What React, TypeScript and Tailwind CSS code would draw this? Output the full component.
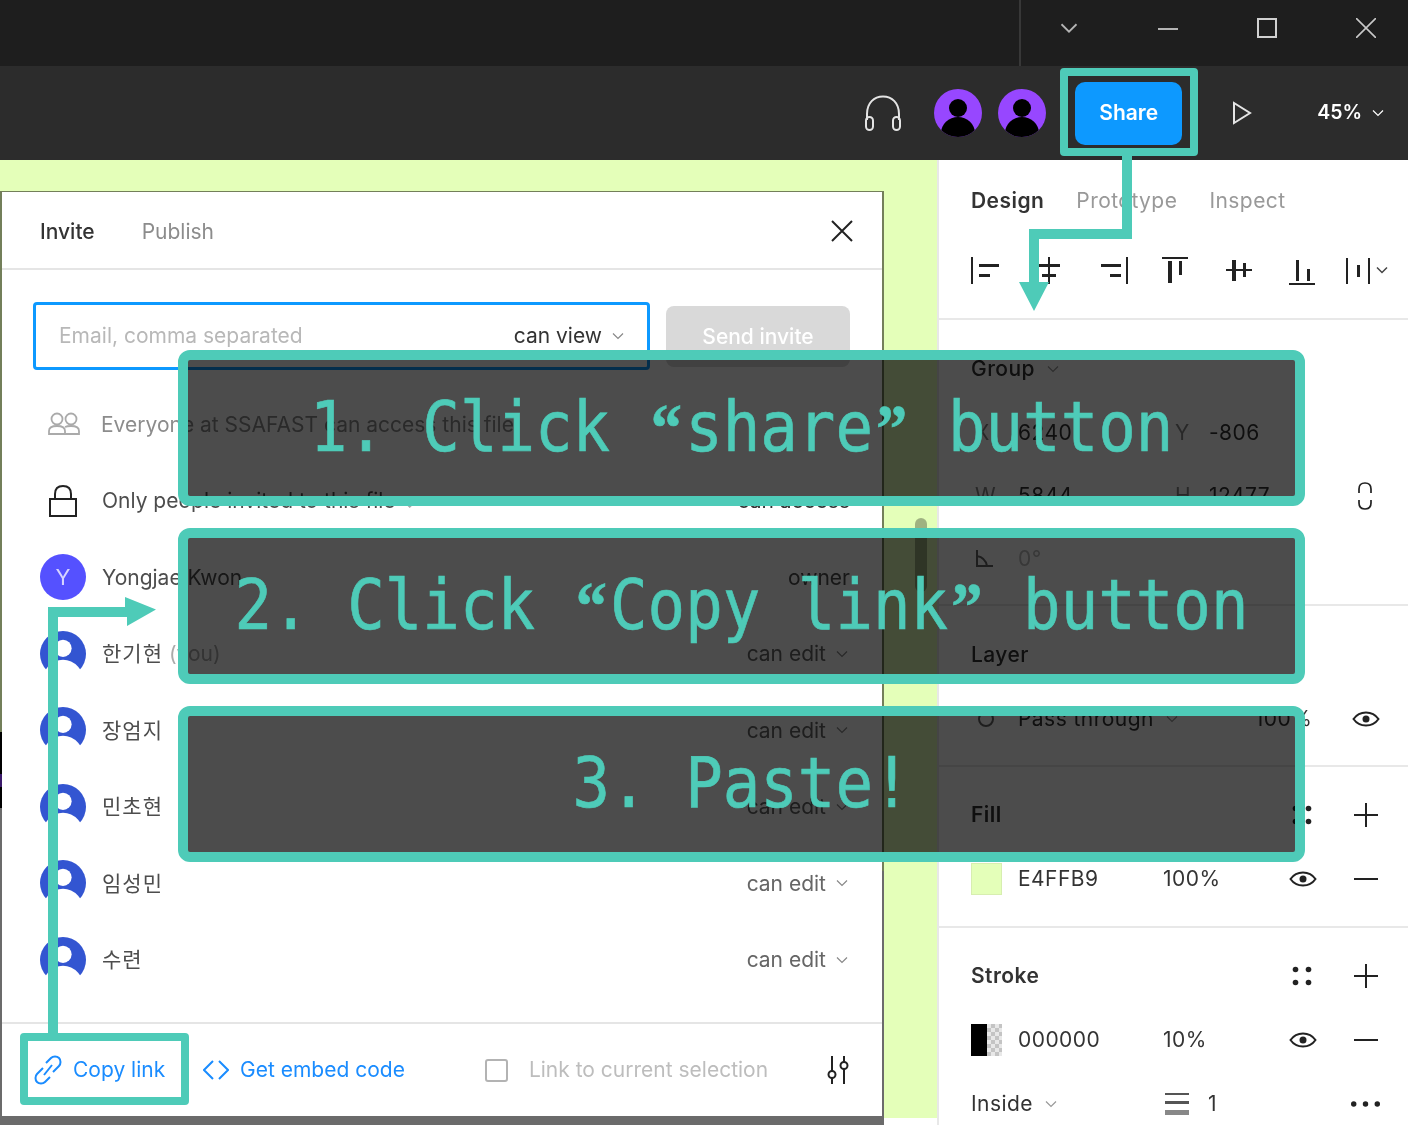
const uiFont = "font-['Inter','Noto_Sans_CJK_KR',sans-serif]";

function Chevron({ className = "" }: { className?: string }) {
  return (
    <svg viewBox="0 0 12 8" className={className} fill="none" stroke="currentColor" strokeWidth="1.2">
      <path d="M1 1.5 6 6.5 11 1.5" />
    </svg>
  );
}

function ToolbarPerson() {
  return (
    <svg viewBox="0 0 48 48" className="w-full h-full">
      <defs>
        <clipPath id="avatar-clip">
          <circle cx="24" cy="24" r="24" />
        </clipPath>
      </defs>
      <circle cx="24" cy="24" r="24" fill="#9747ff" />
      <g clipPath="url(#avatar-clip)" fill="#000">
        <circle cx="24" cy="19" r="9" />
        <ellipse cx="24" cy="44" rx="17" ry="16" />
      </g>
    </svg>
  );
}

function MemberPerson() {
  return (
    <svg viewBox="0 0 48 48" className="w-full h-full">
      <circle cx="24" cy="24" r="24" fill="#3355d1" />
      <circle cx="24" cy="18" r="9" fill="#fff" />
      <ellipse cx="24" cy="54" rx="22" ry="24" fill="#fff" />
    </svg>
  );
}

function Eye() {
  return (
    <svg viewBox="0 0 28 16" className="w-7 h-4" fill="none" stroke="#222" strokeWidth="2">
      <path d="M1.5 8C5 3 9 1.5 14 1.5S23 3 26.5 8C23 13 19 14.5 14 14.5S5 13 1.5 8Z" />
      <circle cx="14" cy="8" r="3.5" fill="#222" stroke="none" />
    </svg>
  );
}

function Plus() {
  return (
    <svg viewBox="0 0 24 24" className="w-6 h-6" stroke="#222" strokeWidth="2">
      <path d="M12 0V24M0 12H24" />
    </svg>
  );
}

function Minus() {
  return (
    <svg viewBox="0 0 24 24" className="w-6 h-6" stroke="#222" strokeWidth="2">
      <path d="M0 12H24" />
    </svg>
  );
}

function Dots() {
  return (
    <svg viewBox="0 0 20 20" className="w-5 h-5" fill="#222">
      <circle cx="3.5" cy="3.5" r="2.8" />
      <circle cx="16.5" cy="3.5" r="2.8" />
      <circle cx="3.5" cy="16.5" r="2.8" />
      <circle cx="16.5" cy="16.5" r="2.8" />
    </svg>
  );
}

function AlignIcons() {
  return (
    <svg viewBox="970 255 421 32" className="w-[421px] h-8" fill="#222" stroke="none">
      <rect x="971" y="257" width="2" height="27" />
      <rect x="979" y="264" width="20" height="3" />
      <rect x="979" y="274" width="11" height="3" />
      <rect x="1048" y="257" width="2" height="27" />
      <rect x="1038" y="264" width="22" height="3" />
      <rect x="1042" y="274" width="14" height="3" />
      <rect x="1126" y="257" width="2" height="27" />
      <rect x="1101" y="264" width="20" height="3" />
      <rect x="1110" y="274" width="11" height="3" />
      <rect x="1162" y="257" width="26" height="2" />
      <rect x="1168" y="261" width="4" height="22" />
      <rect x="1179" y="261" width="3" height="14" />
      <rect x="1226" y="269" width="26" height="2" />
      <rect x="1232" y="260" width="4" height="21" />
      <rect x="1243" y="263" width="3" height="14" />
      <rect x="1289" y="283" width="26" height="2" />
      <rect x="1296" y="260" width="3" height="21" />
      <rect x="1307" y="269" width="3" height="12" />
      <rect x="1346" y="258" width="2" height="26" />
      <rect x="1368" y="258" width="2" height="26" />
      <rect x="1357" y="265" width="3" height="12" />
      <path d="M1377 267.5 1382 272.5 1387 267.5" fill="none" stroke="#444" strokeWidth="1.5" />
    </svg>
  );
}

function TitleBar() {
  return (
    <div className="h-[66px] bg-[#1e1e1e] flex justify-end">
      <div className="w-[389px] border-l-2 border-[#383838] flex items-center pb-[10px] text-[#b4b4b4]">
        <div className="w-[99px] -ml-0.5 shrink-0 flex justify-center">
          <Chevron className="w-5 h-3" />
        </div>
        <div className="w-[99px] shrink-0 flex justify-center">
          <div className="w-5 h-0.5 bg-[#b4b4b4] mt-0.5"></div>
        </div>
        <div className="w-[99px] shrink-0 flex justify-center">
          <div className="w-[20px] h-[20px] border-2 border-[#d0d0d0]"></div>
        </div>
        <div className="w-[99px] shrink-0 flex justify-center">
          <svg viewBox="0 0 20 20" className="w-5 h-5" stroke="#c8c8c8" strokeWidth="1.6">
            <path d="M0 0 20 20M20 0 0 20" />
          </svg>
        </div>
      </div>
    </div>
  );
}

function ToolBar() {
  return (
    <div className="h-[94px] bg-[#2c2c2c] flex items-center justify-end text-white">
      <svg viewBox="0 0 38 36" className="w-[38px] h-9 mr-[32px]" fill="none" stroke="#e4e4e4" strokeWidth="2">
        <path d="M3 25V19C3 8 10 1.500 19 1.500S35 8 35 19V25" />
        <rect x="2" y="22" width="7" height="13" rx="3.500" />
        <rect x="29" y="22" width="7" height="13" rx="3.500" />
      </svg>
      <div className="w-12 h-12 mr-[16px]">
        <ToolbarPerson />
      </div>
      <div className="w-12 h-12 mr-[29px]">
        <ToolbarPerson />
      </div>
      <div className="w-[107px] h-[63px] rounded-[10px] bg-[#0d99ff] flex items-center justify-center text-[21px] font-semibold mr-[50px]">
        Share
      </div>
      <svg viewBox="0 0 20 24" className="w-5 h-6 mr-[65px]" fill="none" stroke="#e4e4e4" strokeWidth="2">
        <path d="M2 2V22L18 12Z" />
      </svg>
      <span className="text-[19.5px] font-semibold">45%</span>
      <Chevron className="w-3 h-2 ml-[10px] mr-[24px]" />
    </div>
  );
}

function MemberRow({ name, role, you, initial }: { name: string; role: string; you?: boolean; initial?: boolean }) {
  const korean = /[가-힣]/.test(name);
  return (
    <div className="h-[76.5px] flex items-center text-[21px] text-[#4d4d4d]">
      {initial ? (
        <div className="w-[46px] h-[46px] rounded-full bg-[#5551ff] flex items-center justify-center text-[#d6d4ff] text-[22px]">
          Y
        </div>
      ) : (
        <div className="w-[46px] h-[46px]">
          <MemberPerson />
        </div>
      )}
      <span className="ml-4 flex-1">
        <span className={korean ? "tracking-[1px]" : ""}>{name}</span>
        {you && <span className="text-[#aaa]"> (you)</span>}
      </span>
      <span className={role === "owner" ? "text-[#4d4d4d]" : "text-[#666]"}>{role}</span>
      {role !== "owner" && <Chevron className="w-3 h-2 ml-[10px] mr-0.5 text-[#888]" />}
    </div>
  );
}

function Modal() {
  return (
    <div className="w-[884px] h-[934px] pt-px bg-[linear-gradient(to_bottom,#737f5a_0,#737f5a_541px,#000_541px,#000_583px,#3b1a6b_583px,#3b1a6b_596px,#000_596px,#000_617px,#6b6b6b_617px,#6b6b6b_100%)] px-0.5 relative">
      <div className="absolute right-0 top-0 bottom-0 w-0.5 bg-[linear-gradient(to_bottom,#737f5a_0,#737f5a_680px,#6b6b6b_680px)]"></div>
      <div className="h-[924px] bg-white flex flex-col relative">
        <div className="h-[78px] border-b-2 border-[#e5e5e5] flex items-center pl-[38px] pr-[29px] text-[21px]">
          <span className="font-medium text-[#333] mt-[3px]">Invite</span>
          <span className="ml-[47px] flex-1 text-[#8c8c8c] mt-[3px]">Publish</span>
          <svg viewBox="0 0 22 22" className="w-[22px] h-[22px] mt-0.5" stroke="#222" strokeWidth="2">
            <path d="M1 1 21 21M21 1 1 21" />
          </svg>
        </div>
        <div className="h-[116px] pt-[32px] pl-[31px] pr-[32px] flex gap-4 items-start">
          <div className="w-[617px] h-[68px] border-[3px] border-[#0d99ff] rounded-[4px] flex items-center pl-[23px] pr-[23px] text-[21px]">
            <span className="flex-1 text-[#b8b8b8]">Email, comma separated</span>
            <span className="text-[#333]">can view</span>
            <Chevron className="w-3 h-2 ml-[10px] text-[#888]" />
          </div>
          <div className="w-[184px] h-[61px] mt-1 rounded-lg bg-[#d9d9d9] text-white font-medium text-[21px] flex items-center justify-center">
            Send invite
          </div>
        </div>
        <div className="flex-1 pl-[38px] pr-[32px]">
          <div className="h-[76.5px] flex items-center text-[21px] text-[#8c8c8c]">
            <svg viewBox="0 0 32 24" className="w-8 h-6 ml-2 mr-[21px]" fill="none" stroke="#aaa" strokeWidth="1.8">
              <circle cx="9" cy="7" r="5.500" />
              <circle cx="23" cy="7" r="5.500" />
              <path d="M1 22V19C1 16 4 14 9 14S17 16 17 19V22ZM17 15C19 14 21 14 23 14 28 14 31 16 31 19V22H17" />
            </svg>
            Everyone at SSAFAST can access this file
          </div>
          <div className="h-[76.5px] flex items-center text-[21px] text-[#4d4d4d]">
            <svg viewBox="0 0 28 32" className="w-7 h-8 ml-[9px] mr-[25px]" fill="none" stroke="#222" strokeWidth="2">
              <rect x="1" y="14" width="26" height="17" />
              <path d="M6 14V9C6 4 9 1 14 1S22 4 22 9V14" />
            </svg>
            <span className="flex-1">
              Only people invited to this file <span className="text-[#aaa]">⌄</span>
            </span>
            <span className="text-[#333]">can access</span>
          </div>
          <MemberRow name="Yongjae Kwon" role="owner" initial />
          <MemberRow name="한기현" role="can edit" you />
          <MemberRow name="장엄지" role="can edit" />
          <MemberRow name="민초현" role="can edit" />
          <MemberRow name="임성민" role="can edit" />
          <MemberRow name="수련" role="can edit" />
        </div>
        <div className="h-[94px] border-t-2 border-[#e5e5e5] flex items-center pl-[32px] pr-[32px] text-[21px] text-[#1a8cff] whitespace-nowrap">
          <svg viewBox="0 0 28 30" className="w-7 h-[30px] shrink-0" fill="none" stroke="#1a8cff" strokeWidth="2">
            <path d="M12 8 17 3C19 1 23 1 25 3S27 9 25 11L19 17M16 22 11 27C9 29 5 29 3 27S1 21 3 19L9 13M10 20 18 10" />
          </svg>
          <span className="ml-[11px] w-[92px] shrink-0">Copy link</span>
          <svg viewBox="0 0 26 20" className="w-[26px] h-5 ml-[38px] shrink-0" fill="none" stroke="#1a8cff" strokeWidth="2">
            <path d="M10 1 1 10 10 19M16 1 25 10 16 19" />
          </svg>
          <span className="ml-[11px]">Get embed code</span>
          <div className="w-[23px] h-[23px] ml-[80px] border-2 border-[#b3b3b3] rounded-[3px] shrink-0"></div>
          <span className="ml-[21px] flex-1 text-[#bdbdbd]">Link to current selection</span>
          <svg viewBox="0 0 24 28" className="w-6 h-7 shrink-0" fill="none" stroke="#222" strokeWidth="2">
            <path d="M6 0V15M6 22V28M18 0V6M18 13V28" />
            <circle cx="6" cy="18.500" r="3.500" />
            <circle cx="18" cy="9.500" r="3.500" />
          </svg>
        </div>
      </div>
    </div>
  );
}

function Section({ children, className = "" }: { children: React.ReactNode; className?: string }) {
  return <div className={`border-b-2 border-[#e8e8e8] pl-[32px] ${className}`}>{children}</div>;
}

function DimRow({ a, b, c, d, icon }: { a: string; b: string; c: string; d: string; icon?: React.ReactNode }) {
  return (
    <div className="h-[63px] flex items-center text-[#333]">
      <span className="w-[47px] pl-1 text-[#888]">{a}</span>
      <span className="w-[145px]">{b}</span>
      <span className="w-[46px] pl-3 text-[#888]">{c}</span>
      <span className="w-[126px]">{d}</span>
      {icon}
    </div>
  );
}

function ColorRow({ swatch, hex, pct }: { swatch: React.ReactNode; hex: string; pct: string }) {
  return (
    <div className="h-16 flex items-center text-[#333]">
      <div className="w-[47px]">{swatch}</div>
      <span className="w-[145px]">{hex}</span>
      <span className="w-[126px]">{pct}</span>
      <Eye />
      <div className="ml-[37px]">
        <Minus />
      </div>
    </div>
  );
}

function HeadRow({ title }: { title: string }) {
  return (
    <div className="h-16 flex items-center font-semibold text-[#333]">
      <span className="w-[321px]">{title}</span>
      <Dots />
      <div className="ml-[42px]">
        <Plus />
      </div>
    </div>
  );
}

function SidePanel() {
  return (
    <div className="flex-1 bg-white border-l-2 border-[#e8e8e8] h-[965px] overflow-hidden text-[21px] tracking-[0.45px]">
      <Section className="h-[160px]">
        <div className="h-20 flex items-center gap-8 text-[#999] pt-0.5">
          <span className="font-semibold text-[#333]">Design</span>
          <span>Prototype</span>
          <span>Inspect</span>
        </div>
        <div className="pt-[15px] -ml-px">
          <AlignIcons />
        </div>
      </Section>
      <Section className="h-[286px] pt-[17px]">
        <div className="h-16 flex items-center font-medium text-[#333]">
          Group
          <Chevron className="w-3 h-2 ml-3 text-[#999]" />
        </div>
        <DimRow a="X" b="6240" c="Y" d="-806" />
        <DimRow
          a="W"
          b="5844"
          c="H"
          d="12477"
          icon={
            <svg viewBox="0 0 14 28" className="w-3.5 h-7 ml-[23px]" fill="none" stroke="#222" strokeWidth="1.7">
              <path d="M1 11V7C1 3 3 1 7 1S13 3 13 7V11M1 18V21C1 25 3 27 7 27S13 25 13 21V18" />
            </svg>
          }
        />
        <div className="h-[63px] flex items-center text-[#bbb]">
          <svg viewBox="0 0 18 18" className="w-[18px] h-[18px] ml-1 mr-[25px]" fill="none" stroke="#666" strokeWidth="2">
            <path d="M2 0V16H18M2 6C8 7 11 11 12 16" />
          </svg>
          0°
        </div>
      </Section>
      <Section className="h-[161px] pt-[17px]">
        <div className="h-16 flex items-center font-medium text-[#333]">Layer</div>
        <div className="h-16 flex items-center text-[#333]">
          <div className="w-[47px] pl-[7px]">
            <div className="w-4 h-4 rounded-full border-2 border-[#666]"></div>
          </div>
          <span>Pass through</span>
          <Chevron className="w-3 h-2 ml-3 text-[#999]" />
          <span className="w-[53px] ml-[77px]">100%</span>
          <div className="ml-[44px]">
            <Eye />
          </div>
        </div>
      </Section>
      <Section className="h-[161px] pt-[16px]">
        <HeadRow title="Fill" />
        <ColorRow swatch={<div className="w-[31px] h-[32px] bg-[#e4ffb9] border border-[#d7eeb0]"></div>} hex="E4FFB9" pct="100%" />
      </Section>
      <div className="pl-[32px] pt-[16px]">
        <HeadRow title="Stroke" />
        <ColorRow
          swatch={
            <div className="w-[31px] h-[32px] flex">
              <div className="w-4 bg-black"></div>
              <div className="flex-1 bg-[repeating-conic-gradient(#c4c4c4_0_25%,#e8e8e8_0_50%)] bg-[length:8px_8px]"></div>
            </div>
          }
          hex="000000"
          pct="10%"
        />
        <div className="h-[63px] flex items-center text-[#333]">
          <span>Inside</span>
          <Chevron className="w-3 h-2 ml-3 text-[#999]" />
          <svg viewBox="0 0 24 24" className="w-6 h-6 ml-[108px]" fill="#555">
            <rect y="1" width="24" height="2" />
            <rect y="9" width="24" height="3" />
            <rect y="18" width="24" height="5" fill="#888" />
          </svg>
          <span className="ml-[19px] w-[143px]">1</span>
          <svg viewBox="0 0 32 6" className="w-[29px] h-1.5" fill="#222">
            <circle cx="3" cy="3" r="3" />
            <circle cx="16" cy="3" r="3" />
            <circle cx="29" cy="3" r="3" />
          </svg>
        </div>
      </div>
    </div>
  );
}

function Quote({ children }: { children: React.ReactNode }) {
  return <span className="inline-block w-[37.44px] text-center font-['Liberation_Serif',serif] font-bold">{children}</span>;
}

function Callout({ top, children }: { top: string; children: React.ReactNode }) {
  return (
    <div
      className={`absolute left-[178px] w-[1127px] h-[156px] border-[10px] border-[#4ecbb8] rounded-[12px] bg-black/70 flex items-center justify-center text-[#4ecbb8] text-[62.400px] whitespace-pre font-['DejaVu_Sans_Mono',monospace] ${top}`}
    >
      <span className="scale-y-[1.1] [-webkit-text-stroke:0.6px_#4ecbb8]">{children}</span>
    </div>
  );
}

function Arrows() {
  return (
    <svg viewBox="0 0 1408 1125" className="absolute inset-0 w-[1408px] h-[1125px] pointer-events-none" fill="#4ecbb8">
      <path d="M1122 156H1132V239H1039V282H1049L1034 311 1019 282H1029V229H1122Z" />
      <path d="M48 1033V607H125V597L156 609.500 127 626V617H58V1033Z" />
    </svg>
  );
}

export default function App() {
  return (
    <div className={`relative w-[1408px] h-[1125px] overflow-hidden bg-white ${uiFont}`}>
      <div className="blur-[0.6px]">
        <TitleBar />
        <ToolBar />
        <div className="flex h-[958px] items-start">
          <div className="w-[937px] shrink-0 h-[958px] bg-[#e4ffb9] pt-[31px] relative">
            <Modal />
            <div className="absolute left-[915px] top-[358px] w-3 h-[74px] rounded-full bg-black/30"></div>
          </div>
          <SidePanel />
        </div>
      </div>

      {/* annotations */}
      <Callout top="top-[350px]">
        1. Click <Quote>“</Quote>share<Quote>”</Quote> button
      </Callout>
      <Callout top="top-[528px]">
        2. Click <Quote>“</Quote>Copy link<Quote>”</Quote> button
      </Callout>
      <Callout top="top-[706px]">3. Paste!</Callout>
      <div className="absolute left-[1060px] top-[68px] w-[138px] h-[88px] border-[8px] border-[#4ecbb8] rounded-[4px]"></div>
      <div className="absolute left-[20px] top-[1033px] w-[169px] h-[72px] border-[8px] border-[#4ecbb8] rounded-[4px]"></div>
      <Arrows />
    </div>
  );
}
